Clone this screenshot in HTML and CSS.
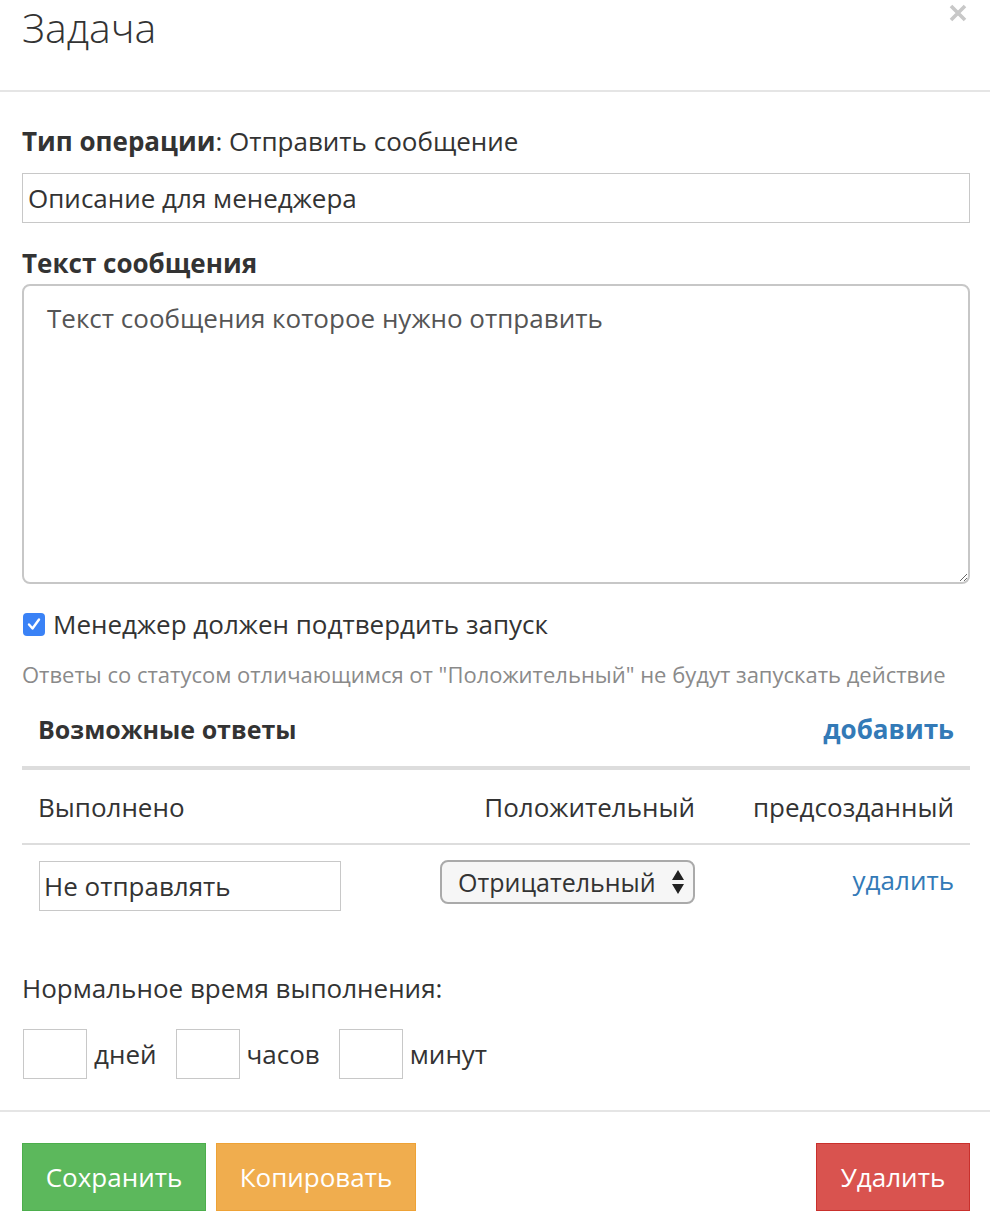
FILE: index.html
```html
<!DOCTYPE html>
<html lang="ru">
<head>
<meta charset="utf-8">
<title>Задача</title>
<link rel="stylesheet" href="styles.css">
</head>
<body>
<div class="modal">
  <div class="modal-header">
    <h1 class="modal-title">Задача</h1>
    <button class="close" type="button" aria-label="Закрыть"><svg viewBox="0 0 18 18" width="18" height="18"><path d="M2 2 L16 16 M16 2 L2 16" stroke="#c8c8c8" stroke-width="3.6" stroke-linecap="butt"/></svg></button>
  </div>
  <div class="modal-body">
    <p class="op-type"><b>Тип операции</b>: Отправить сообщение</p>
    <input class="field" type="text" value="Описание для менеджера">
    <label class="section-label">Текст сообщения</label>
    <textarea class="message">Текст сообщения которое нужно отправить</textarea>
    <label class="check-row">
      <span class="checkbox"><svg viewBox="0 0 22 22" width="22" height="22"><path d="M6 11.5 L9.5 15.5 L16 6.5" fill="none" stroke="#fff" stroke-width="2.4" stroke-linecap="round" stroke-linejoin="round"/></svg></span>
      <span>Менеджер должен подтвердить запуск</span>
    </label>
    <p class="help">Ответы со статусом отличающимся от "Положительный" не будут запускать действие</p>

    <div class="answers">
      <div class="answers-head">
        <span class="answers-title">Возможные ответы</span>
        <a class="link-bold" href="#">добавить</a>
      </div>
      <div class="answer-row header-row">
        <span class="col-name">Выполнено</span>
        <span class="col-status">Положительный</span>
        <span class="col-action">предсозданный</span>
      </div>
      <div class="answer-row edit-row">
        <span class="col-name"><input class="small-field" type="text" value="Не отправлять"></span>
        <span class="col-status">
          <span class="select">Отрицательный
            <svg class="arrows" viewBox="0 0 14 26" width="14" height="26"><path d="M7 1 L13 11 H1 Z M7 25 L13 15 H1 Z" fill="#222"/></svg>
          </span>
        </span>
        <span class="col-action"><a class="link" href="#">удалить</a></span>
      </div>
    </div>

    <p class="time-label">Нормальное время выполнения:</p>
    <div class="time-row">
      <span class="time-box"></span><span class="unit">дней</span>
      <span class="time-box"></span><span class="unit">часов</span>
      <span class="time-box"></span><span class="unit">минут</span>
    </div>
  </div>
  <div class="modal-footer">
    <div class="left-btns">
      <button class="btn btn-green">Сохранить</button>
      <button class="btn btn-orange">Копировать</button>
    </div>
    <button class="btn btn-red">Удалить</button>
  </div>
</div>
</body>
</html>
```
FILE: styles.css
```css
* { box-sizing: border-box; }
html, body { margin: 0; padding: 0; background: #fff; }
body {
  font-family: "Open Sans", "Noto Sans", sans-serif;
  color: #333;
  font-size: 26px;
}
.modal { width: 990px; }
.modal-header {
  height: 92px;
  border-bottom: 2px solid #e5e5e5;
  display: flex;
  justify-content: space-between;
  align-items: flex-start;
  padding: 0 23px 0 22px;
}
.modal-title {
  margin: 0;
  font-weight: 300;
  font-size: 41px;
  line-height: 54px;
  color: #333;
}
.close {
  border: 0;
  background: none;
  padding: 0;
  margin: 4px 0 0;
  width: 18px;
  height: 18px;
  display: block;
}
.close svg { display: block; }
.modal-body { padding: 0 20px 0 22px; }
.op-type {
  margin: 0;
  padding-top: 34px;
  line-height: 30px;
}
.op-type b { font-weight: 700; }
.field {
  display: block;
  width: 100%;
  height: 50px;
  margin-top: 17px;
  border: 1px solid #c8c8c8;
  padding: 0 5px;
  font: inherit;
  color: #333;
  border-radius: 0;
}
.section-label {
  display: block;
  margin-top: 25px;
  font-weight: 700;
  line-height: 30px;
}
.message {
  display: block;
  width: 100%;
  height: 300px;
  margin-top: 6px;
  border: 2px solid #c7c7c7;
  border-radius: 8px;
  padding: 15px 23px;
  font: inherit;
  line-height: 34px;
  color: #555;
  resize: vertical;
}
.check-row {
  display: flex;
  align-items: center;
  gap: 8px;
  margin-top: 25px;
  line-height: 30px;
}
.checkbox {
  width: 22px;
  height: 23px;
  border-radius: 4px;
  background: #3a82f6;
  display: inline-flex;
  align-items: center;
  justify-content: center;
  margin-left: 1px;
}
.help {
  margin: 21px 0 0;
  font-size: 22px;
  line-height: 28px;
  color: #8a8a8a;
}
.answers { margin-top: 12px; }
.answers-head {
  display: flex;
  justify-content: space-between;
  align-items: flex-start;
  padding: 14px 16px 0;
  height: 70px;
  line-height: 30px;
  border-bottom: 4px solid #ddd;
}
.answers-title { font-weight: 700; font-size: 25px; }
.link-bold { color: #337ab7; font-weight: 700; text-decoration: none; }
.link { color: #337ab7; text-decoration: none; }
.answer-row {
  display: grid;
  grid-template-columns: 1fr 255px 259px;
  align-items: center;
  padding: 0 16px;
}
.header-row {
  height: 75px;
  border-bottom: 2px solid #ddd;
}
.col-status { text-align: right; }
.col-action { text-align: right; }
.edit-row { padding-top: 16px; align-items: start; }
.small-field {
  width: 302px;
  height: 50px;
  border: 1px solid #c8c8c8;
  padding: 0 4px;
  font: inherit;
  color: #333;
  margin-left: 1px;
  border-radius: 0;
}
.select {
  display: inline-flex;
  align-items: center;
  justify-content: space-between;
  width: 255px;
  height: 44px;
  margin-top: -1px;
  border: 2px solid #aaa;
  border-radius: 8px;
  background: #f6f6f6;
  padding: 0 8px 0 16px;
  font-size: 25px;
}
.col-action .link { line-height: 38px; }
.time-label {
  margin: 62px 0 0;
  line-height: 30px;
}
.time-row {
  display: flex;
  align-items: center;
  margin-top: 26px;
}
.time-box {
  width: 64px;
  height: 50px;
  border: 1px solid #c8c8c8;
  margin-left: 1px;
}
.unit { margin: 0 18px 0 7px; }
.modal-footer {
  margin-top: 31px;
  border-top: 2px solid #e5e5e5;
  padding: 31px 20px 0 22px;
  display: flex;
  justify-content: space-between;
}
.left-btns { display: flex; gap: 10px; }
.btn {
  height: 68px;
  padding: 0 20px;
  font: inherit;
  font-size: 26px;
  color: #fff;
  border: 1px solid;
  border-radius: 0;
}
.btn-green { background: #5cb85c; border-color: #4cae4c; width: 184px; }
.btn-orange { background: #f0ad4e; border-color: #eea236; width: 200px; }
.btn-red { background: #d9534f; border-color: #c9302c; width: 154px; }
```
